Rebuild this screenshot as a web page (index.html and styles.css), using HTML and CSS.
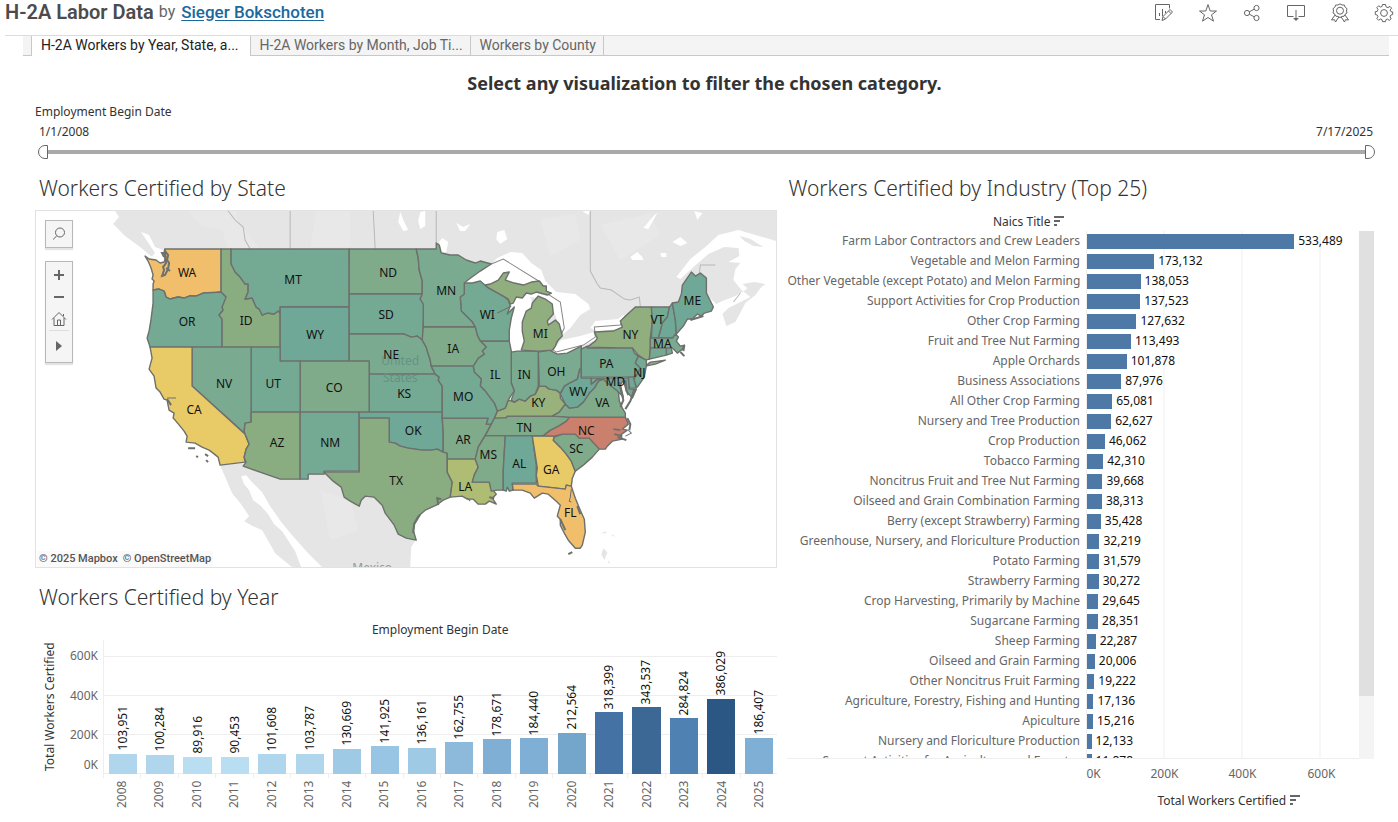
FILE: index.html
```html
<!DOCTYPE html>
<html lang="en">
<head>
<meta charset="utf-8">
<title>H-2A Labor Data</title>
<link rel="stylesheet" href="styles.css">
</head>
<body>
<header class="top">
  <h1 class="top-title">H-2A Labor Data</h1>
  <span class="top-by">by</span>
  <a class="top-author" href="#author">Sieger Bokschoten</a>
  <div class="top-actions">
    <button class="icon-btn" type="button" aria-label="Edit"><svg viewBox="0 0 20 20"><path d="M6 16.500H1.500V1.500H15.500V5.500M5.500 13V10M8.500 13V6M11.500 10V8"/><path d="M8 17.500L9 13.500L16 6.500L18.500 9L11.500 16ZM9 13.500L11.500 16M14.500 8L17 10.500"/></svg></button>
    <button class="icon-btn" type="button" aria-label="Favorite"><svg viewBox="0 0 20 20"><path d="M10 1.500L12.200 8H18.500L13.500 11.800L15.500 18.200L10 14.500L4.500 18.200L6.500 11.800L1.500 8H7.800Z"/></svg></button>
    <button class="icon-btn" type="button" aria-label="Share"><svg viewBox="0 0 20 20"><circle cx="5" cy="10" r="2.600"/><circle cx="14.500" cy="5" r="2.600"/><circle cx="14.500" cy="15" r="2.600"/><path d="M7.300 8.800L12.200 6.200M7.300 11.200L12.200 13.800"/></svg></button>
    <button class="icon-btn" type="button" aria-label="Download"><svg viewBox="0 0 20 20"><path d="M7.500 13.500H1.500V2.500H18.500V13.500H12.500M10 7V16"/><path class="solid" d="M7 15H13L10 18Z"/></svg></button>
    <button class="icon-btn" type="button" aria-label="Details"><svg viewBox="0 0 20 20"><path d="M10 .8L12 2L14.300 2L15.200 4.200L17 5.700L16.500 8L17 10L15 11.300L14 13.300L11.800 13.400L10 14.600L8.200 13.400L6 13.300L5 11.300L3 10L3.500 8L3 5.700L4.800 4.200L5.700 2L8 2Z"/><circle cx="10" cy="7.700" r="3.500"/><path d="M5 12L1.500 17L4.500 16.700L5.500 19L8.800 14M15 12L18.500 17L15.500 16.700L14.500 19L11.200 14"/></svg></button>
    <button class="icon-btn" type="button" aria-label="Settings"><svg viewBox="0 0 20 20"><path d="M8.500 1.500H11.500L12 3.800L14 4.600L16 3.400L17.600 5.200L16 7L17 8.700L18.700 9V11.500L16.800 12L16 14L17.200 15.800L15.200 17.400L13.400 16L12 16.600L11.500 18.700H8.500L8 16.600L6.400 16L4.600 17.300L2.800 15.500L4 13.700L3.200 12L1.300 11.500V8.700L3.300 8.300L4 6.500L2.800 4.700L4.700 2.800L6.400 4L8 3.500Z"/><circle cx="10" cy="10" r="3.400"/></svg></button>
  </div>
</header>

<nav class="tabs">
  <a class="tab tab-active" href="#year">H-2A Workers by Year, State, a...</a>
  <a class="tab" href="#month">H-2A Workers by Month, Job Ti...</a>
  <a class="tab" href="#county">Workers by County</a>
</nav>

<main class="dash">
  <h2 class="dash-title">Select any visualization to filter the chosen category.</h2>

  <section class="filter">
    <h3 class="filter-name">Employment Begin Date</h3>
    <div class="filter-dates"><label for="from">1/1/2008</label><label for="to">7/17/2025</label></div>
    <div class="range">
      <input class="thumb-from" id="from" type="range" min="0" max="100" value="0">
      <input class="thumb-to" id="to" type="range" min="0" max="100" value="100">
    </div>
  </section>

  <div class="columns">
    <div class="col-left">
      <h3 class="sheet-title">Workers Certified by State</h3>
      <div class="map">
        <svg class="map-svg" viewBox="36 211 740 356" role="img" aria-label="Workers certified by state">
          <g class="land">
            <path d="M115 211L119 217L113 224L125 236L140 247L152 257L161 259L165 249L300 262L500 270L560 356L660 340L674 303L706 295L716 304L722 301L735 296L745 290L755 280L763 284L755 295L745 303L735 322L726 326L722 314L728 308L742 301L750 297L741 290L733 280L735 269L740 263L728 262L739 256L738 248L724 247L708 254L692 268L680 279L676 277L690 259L705 247L718 235L738 230L776 241V211Z"/>
            <path d="M220 465L243 463L280 479L330 470L360 480L415 540L411 547L410 567H322L308 553L292 535L282 523L270 506L262 492L252 482L246 475L241 476L244 484L249 490L253 500L261 506L268 514L274 524L282 531L295 551L301 567H292L281 558L275 553L270 544L262 530L253 526L244 521L249 516L241 504L232 493Z"/>
            <path d="M603 548L607 552L604 560L601 554ZM608 560L610 563L608 563ZM600 533L606 531L606 533ZM611 534L615 536L612 536Z"/>
          </g>
          <g class="haze">
            <path d="M188 211L202 227L222 230L228 249H260L246 232L236 218L236 211ZM316 211L350 211V247H310ZM540 220L575 214L580 240L550 256ZM600 225L650 214L660 235L620 260ZM320 490L350 500L358 530L330 540Z"/>
          </g>
          <g class="water">
            <path d="M141 232L149 235L155 247L163 250L163 262L150 258L155 253ZM400 212L404 222L408 230L403 231L398 222ZM420 212L425 211L425 226L420 229L418 221ZM439 242L442 238L448 242L446 252L441 252ZM456 223L463 227L470 224L465 231L460 231ZM497 232L504 230L507 239L500 244L496 239ZM643 228L654 215L657 213L648 229ZM672 242L680 237L687 243L680 246ZM630 257L637 252L642 257L643 260L632 260ZM660 253L666 253L666 257L661 257ZM582 211L590 211L588 215ZM694 211L702 213L697 220Z"/>
            <path d="M464 284L491 264L497 258L510 252L522 253L531 263L541 270L545 281L556 292L575 294L588 304L590 309L580 315L570 328L563 334L560 328L553 310L546 299L530 297L533 305L522 320L526 350L518 353L510 351L507 330L511 302L487 287L472 284Z"/>
            <path d="M552 351L561 340L580 336L597 331L590 328L595 321L618 319L623 315L627 317L621 329L606 330L596 332L597 339L580 347L567 355L554 354Z"/>
            <path d="M738 232L775 242V280L764 288L750 284L742 278L744 270L740 262L742 250Z"/>
          </g>
          <path class="land" d="M739 236L750 239L763 247L753 246L744 241ZM742 284L754 282L765 284L757 290L748 289Z"/>
          <g class="bound">
            <path d="M228 211L235 220L243 227L245 240L250 249M290 211V249M373 211L375 249M436 211V244M590 211V271L597 284L600 288L611 290L624 299L630 300L639 297L640 307M699 273L700 265L715 265M740 293L733 302"/>
            <path class="bound-lake" d="M491 264L503 259L540 282M546 293L560 302L564 328L553 350L556 352L583 345L595 337L594 327L620 325L623 318L635 307"/>
          </g>
          <g class="states">
            <path class="c-orange" d="M145 256L149 259L156 260L160 263L164 262L166 257L164 253L165 249H221V292L213 293H206L203 293L196 296L189 296L184 298L178 297L170 299L166 297L164 291L159 289L153 290L153 284L154 281L152 279L153 275L151 268L148 261Z"/>
            <path class="c-teal" d="M153 290L159 289L164 291L166 297L170 299L178 297L184 298L189 296L196 296L203 293L221 292L226 297L225 302L222 307L223 310L219 315L222 319V347H150L147 338L149 331L151 319L153 303Z"/>
            <path class="c-green2" d="M221 249H231V264L235 272L240 277L245 284H248L248 292L245 299L252 298L256 307L259 309L262 315L267 313L274 314L278 311L280 313V347H222V319L219 315L223 310L222 307L226 297L221 292Z"/>
            <path class="c-teal" d="M231 249H349V307H280V313L278 311L274 314L267 313L262 315L259 309L256 307L252 298L245 299L248 292L248 284H245L240 277L235 272L231 264Z"/>
            <path class="c-teal2" d="M280 307H349V361H280Z"/>
            <path class="c-green1" d="M349 249H416L418 258L419 270L422 281L422 294H349Z"/>
            <path class="c-teal" d="M349 294H422L420 299L424 304L423 327V334L422 340L417 336L411 337L404 334H349Z"/>
            <path class="c-teal1" d="M349 334H404L411 337L417 336L422 340L426 347L428 354L430 360L431 366L435 374H369V361H349Z"/>
            <path class="c-teal" d="M369 374H435L439 377L438 380L442 386V412H369Z"/>
            <path class="c-green1" d="M300 361H369V412H300Z"/>
            <path class="c-teal" d="M251 347H280V361H300V412H251Z"/>
            <path class="c-teal1" d="M192 347H251V412V422L245 423L244 431L245 434L192 386Z"/>
            <path class="c-yellow" d="M150 347H192V386L245 434L249 444L246 449L244 457L245 462L220 465L218 457L213 453L209 450L202 447L195 443L186 442L187 436L184 431L180 426L175 420L173 418L174 413L169 410L167 400L164 399L160 392L156 388L154 376L149 369L152 358Z"/>
            <path class="c-green2" d="M251 412H300V479H280L243 466L246 462L244 457L246 449L249 444L245 434L244 431L245 423L251 422Z"/>
            <path class="c-teal" d="M300 412H359V471H324V474H308V479H300Z"/>
            <path class="c-teal2" d="M359 412H442V418L443 432V452L437 449L431 450L422 450L415 449L408 448L400 446L395 443L389 442V418H359Z"/>
            <path class="c-green2" d="M359 418H389V442L395 443L400 446L408 448L415 449L422 450L431 450L437 449L443 452L447 453V472L452 482L450 497L443 500L436 505L425 510L418 516L414 523L413 530L416 540L406 538L398 534L394 525L385 513L382 505L374 497L365 496L361 500L359 506L350 501L344 497L341 487L333 481L324 472H359Z"/>
            <path class="c-green1" d="M442 418H488L486 424L491 424L485 435L478 447L475 459H447V453L443 452V432Z"/>
            <path class="c-olive" d="M447 459H475L478 467L474 475L472 482H489L491 488L496 494L492 498L496 504L489 501L485 504L478 504L473 499L467 499L462 496L450 497L452 482L447 472Z"/>
            <path class="c-green1" d="M485 435.500H505L503 470V490L497 490L491 491L489 482H472L474 475L478 467L475 459L478 447Z"/>
            <path class="c-teal2" d="M505 435.500H532L536 465V483H512L513 490L509 491L507 487L506 491L503 490V470Z"/>
            <path class="c-yellow" d="M532 436H554L553 440L560 447L566 454L571 461L575 471L572 478L571 486L566 485L565 489L538 486L536 475L537 468Z"/>
            <path class="c-orange" d="M512 484H536L538 486L565 489L566 485L571 486L575 498L580 510L584 519L585 532L582 545L580 548L575 548L568 540L564 533L560 525L560 519L557 516L560 505L556 501L548 494L542 493L534 498L530 493L522 490L513 490Z"/>
            <path class="c-green1" d="M554 437L562 434H575L579 438L589 438L599 449L592 457L583 465L575 471L571 461L566 454L560 447L553 440Z"/>
            <path class="c-red" d="M543 435.500L550 430L558 426L566 421L569 417H625L628 424L622 429L627 430L620 435L622 439L612 441L607 446L605 449H599L589 438H579L575 434H562L554 436Z"/>
            <path class="c-green1" d="M494 417.500H506L507 416H553L569 417L566 421L558 426L550 430L543 435.500H485L488 430L491 424Z"/>
            <path class="c-kentucky" d="M494 418L497 411L505 408L508 400L514 402L519 399L525 401L530 396L535 394L539 386L545 386L549 389L556 390L560 393V398L565 404L559 412L552 416H507L506 417.500Z"/>
            <path class="c-green1" d="M552 416L559 412L565 404L569 408L577 407L583 402L589 393L594 388L598 381L603 379L610 385L618 391L619 401L622 408L625 413V417H569Z"/>
            <path class="c-teal2" d="M560 394L564 386L569 383L573 381L577 379L579 370L581 367V378H591V384L597 379L603 379L598 381L594 388L589 393L583 402L577 407L569 408L565 404Z"/>
            <path class="c-teal1" d="M538 352L549 350L557 354L567 353L575 349L581 346V367L579 370L577 379L569 383L564 386L560 393L556 390L549 389L545 386H539Z"/>
            <path class="c-teal1" d="M511 352L517 351L538 351V386L535 394L530 396L525 401L519 399L514 402L511 400L514 391L511 383Z"/>
            <path class="c-teal1" d="M480 341H509L511 351V383L514 391L511 395L508 400L505 408L497 411L494 403L488 395L485 391L480 386L481 379L474 372L473 366L478 358L484 354L482 351L486 347Z"/>
            <path class="c-teal" d="M464 283L472 283L480 281L487 287L503 296L508 300L510 306L507 314L514 307L511 318L509 330V341H480L477 335L475 327L472 322L461 311L460 297L464 294Z"/>
            <path class="c-teal1" d="M416 249H436V243L439 245L441 253L450 255L458 255L466 260L475 263L480 261L491 264L480 271L469 279L464 283V294L460 297L461 311L472 322L475 327H423V304L420 299L422 294V281L419 270L418 258Z"/>
            <path class="c-green1" d="M423 327H475L477 335L480 341L486 347L482 351L484 354L478 358L473 366H431L430 360L428 354L426 347L422 340Z"/>
            <path class="c-teal" d="M431 366H473L474 372L481 379L480 386L485 391L488 395L494 403L497 411L494 418L491 424H486L488 418H442V386L438 380L439 377L435 374Z"/>
            <path class="c-green3" d="M521 350L524 341L522 331V322L526 311L531 308L532 303L538 296L545 299L552 304L553 314L547 321L548 325L555 320L559 324L562 336L557 341L555 346L552 350L538 351Z"/>
            <path class="c-green3" d="M485 285L490 284L498 280L503 273L509 272L505 280L514 283L523 285L531 282L539 281L543 286L546 286L546 291L551 293L547 295L536 292L531 294L526 293L522 298L516 297L513 303L510 304L508 299L503 296L487 287Z"/>
            <path class="c-green3" d="M587 347L595 341L597 338L594 332L613 331L622 327L620 321L635 307H651L652 320L650 338V350L649 359L645 360L638 355L632 348Z"/>
            <path class="c-green3" d="M645 366L650 362L658 361L665 360L655 364Z"/>
            <path class="c-teal" d="M581 349L587 346V348H632L634 353L638 356L635 363L640 368L637 374L633 377H581Z"/>
            <path class="c-teal" d="M638 356L646 360V366L645 371L644 377L637 387L632 381L637 374L640 368L635 363Z"/>
            <path class="c-teal" d="M651 307H669L667 317L662 323L660 331L658 338H651L652 320Z"/>
            <path class="c-teal2" d="M669 307L672 303L675 320L676 334L672 338H658L660 331L662 323L667 317Z"/>
            <path class="c-teal1" d="M650 338H672L675 334L678 337L676 341L680 346L684 345L682 349L677 353L672 348H650Z"/>
            <path class="c-teal" d="M650 348H666V355L649 359ZM666 348H671L672 353L666 355Z"/>
            <path class="c-teal2" d="M672 303L678 302L681 294L682 285L691 272L695 276L700 273L706 278V293L709 299L713 307L711 311L704 313L701 316L697 314L692 319L687 319L683 326L676 334L675 320Z"/>
            <path class="c-teal" d="M591 378H628L629 389H636L632 398L626 391L623 380L620 385L623 397L616 390L607 383L603 379L597 379L591 384Z"/>
            <path class="c-teal2" d="M628 377H633L636 388H629Z"/>
          </g>
          <g class="coast">
            <path d="M165 251L168 255L167 260L169 263L168 269L165 275L162 276L164 270L163 267L166 263L165 258ZM166 253L162 253L164 257M166 268L170 271M167 399L171 405M188 448L195 448M196 456L198 457M205 454L208 456M206 460L208 462M577 506L580 514M568 554L572 552M560 519L565 530M619 382L621 392L623 400L620 407M625 380L626 390L628 395M634 389L630 401L625 409M620 430L613 429M622 436L614 434M617 437L626 440M627 418L630 424L629 430M680 352L684 356M684 345L683 351M413 533L414 524L420 514M438 505L437 498L441 499M489 497L494 498M703 316L690 320"/>
            <path class="coast-thin" d="M167 398H176M571 489L570 497L569 501L571 502M497 313L511 306M467 498L470 501M628 430L631 433L625 436"/>
          </g>
          <text class="country" x="400" y="365">United</text><text class="country" x="400" y="382">States</text>
          <text class="country mexico" x="372" y="572">Mexico</text>
          <g class="abbr">
            <text x="187" y="277">WA</text><text x="187" y="326">OR</text><text x="246" y="325">ID</text><text x="293" y="284">MT</text><text x="315" y="339">WY</text><text x="388" y="277">ND</text><text x="386" y="319">SD</text><text x="391" y="359">NE</text><text x="404" y="398">KS</text><text x="334" y="392">CO</text><text x="273" y="388">UT</text><text x="224" y="388">NV</text><text x="194" y="414">CA</text><text x="277" y="447">AZ</text><text x="330" y="447">NM</text><text x="413" y="435">OK</text><text x="396" y="485">TX</text><text x="463" y="444">AR</text><text x="465" y="491">LA</text><text x="488" y="459">MS</text><text x="519" y="468">AL</text><text x="551" y="474">GA</text><text x="570" y="517">FL</text><text x="576" y="453">SC</text><text x="586" y="435">NC</text><text x="524" y="432">TN</text><text x="538" y="407">KY</text><text x="602" y="407">VA</text><text x="578" y="396">WV</text><text x="556" y="376">OH</text><text x="524" y="379">IN</text><text x="495" y="379">IL</text><text x="487" y="319">WI</text><text x="446" y="295">MN</text><text x="453" y="353">IA</text><text x="463" y="401">MO</text><text x="540" y="338">MI</text><text x="630" y="339">NY</text><text x="606" y="368">PA</text><text x="639" y="377">NJ</text><text x="657" y="324">VT</text><text x="662" y="348">MA</text><text x="692" y="305">ME</text><text x="615" y="386">MD</text>
          </g>
        </svg>
        <div class="map-tools">
          <div class="tool-group"><button class="tool" type="button" aria-label="Search map"><svg viewBox="0 0 16 16"><circle cx="9" cy="6.500" r="4.500"/><path d="M5.800 9.800L2 13.500"/></svg></button></div>
          <div class="tool-group tool-stack">
            <button class="tool" type="button" aria-label="Zoom in"><svg class="heavy" viewBox="0 0 16 16"><path d="M3 8H13M8 3V13"/></svg></button>
            <button class="tool" type="button" aria-label="Zoom out"><svg class="heavy" viewBox="0 0 16 16"><path d="M3 8H13"/></svg></button>
            <button class="tool" type="button" aria-label="Reset map"><svg viewBox="0 0 16 16"><path d="M1 8.500L8 1.500L15 8.500M3 7V14.500H13V7M6.500 14.500V9H9.500V14.500M12.500 5V3"/></svg></button>
            <button class="tool tool-more" type="button" aria-label="Map options"><svg viewBox="0 0 16 16"><path class="solid" d="M5 3L11 8L5 13Z"/></svg></button>
          </div>
        </div>
        <div class="credits"><a href="#mapbox">© 2025 Mapbox</a><a href="#osm">© OpenStreetMap</a></div>
      </div>

      <h3 class="sheet-title sheet-title-year">Workers Certified by Year</h3>
      <p class="year-head">Employment Begin Date</p>
      <div class="year-chart">
        <div class="y-name">Total Workers Certified</div>
        <div class="y-axis"><span>600K</span><span>400K</span><span>200K</span><span>0K</span></div>
        <div class="y-main">
          <div class="y-plot">
            <div class="y-col"><span>103,951</span><i class="b2" style="height:15.2%"></i></div>
            <div class="y-col"><span>100,284</span><i class="b2" style="height:14.7%"></i></div>
            <div class="y-col"><span>89,916</span><i class="b1" style="height:13.1%"></i></div>
            <div class="y-col"><span>90,453</span><i class="b1" style="height:13.2%"></i></div>
            <div class="y-col"><span>101,608</span><i class="b2" style="height:14.9%"></i></div>
            <div class="y-col"><span>103,787</span><i class="b2" style="height:15.2%"></i></div>
            <div class="y-col"><span>130,669</span><i class="b3" style="height:19.1%"></i></div>
            <div class="y-col"><span>141,925</span><i class="b4" style="height:20.7%"></i></div>
            <div class="y-col"><span>136,161</span><i class="b3" style="height:19.9%"></i></div>
            <div class="y-col"><span>162,755</span><i class="b5" style="height:23.8%"></i></div>
            <div class="y-col"><span>178,671</span><i class="b6" style="height:26.1%"></i></div>
            <div class="y-col"><span>184,440</span><i class="b6" style="height:27%"></i></div>
            <div class="y-col"><span>212,564</span><i class="b7" style="height:31.1%"></i></div>
            <div class="y-col"><span>318,399</span><i class="b9" style="height:46.5%"></i></div>
            <div class="y-col"><span>343,537</span><i class="b10" style="height:50.2%"></i></div>
            <div class="y-col"><span>284,824</span><i class="b8" style="height:41.6%"></i></div>
            <div class="y-col"><span>386,029</span><i class="b11" style="height:56.4%"></i></div>
            <div class="y-col"><span>186,407</span><i class="b6" style="height:27.3%"></i></div>
          </div>
          <div class="y-years"><span>2008</span><span>2009</span><span>2010</span><span>2011</span><span>2012</span><span>2013</span><span>2014</span><span>2015</span><span>2016</span><span>2017</span><span>2018</span><span>2019</span><span>2020</span><span>2021</span><span>2022</span><span>2023</span><span>2024</span><span>2025</span></div>
        </div>
      </div>
    </div>

    <div class="col-right">
      <h3 class="sheet-title">Workers Certified by Industry (Top 25)</h3>
      <div class="naics">Naics Title <svg class="sort" viewBox="0 0 10 10"><path d="M0 1H10M0 5H6M0 9H3"/></svg></div>
      <div class="ind">
        <div class="ind-view">
          <table class="ind-table">
            <tbody>
            <tr><th scope="row">Farm Labor Contractors and Crew Leaders</th><td><div class="bar"><i style="width:76.2%"></i>533,489</div></td></tr>
            <tr><th scope="row">Vegetable and Melon Farming</th><td><div class="bar"><i style="width:24.7%"></i>173,132</div></td></tr>
            <tr><th scope="row">Other Vegetable (except Potato) and Melon Farming</th><td><div class="bar"><i style="width:19.7%"></i>138,053</div></td></tr>
            <tr><th scope="row">Support Activities for Crop Production</th><td><div class="bar"><i style="width:19.6%"></i>137,523</div></td></tr>
            <tr><th scope="row">Other Crop Farming</th><td><div class="bar"><i style="width:18.2%"></i>127,632</div></td></tr>
            <tr><th scope="row">Fruit and Tree Nut Farming</th><td><div class="bar"><i style="width:16.2%"></i>113,493</div></td></tr>
            <tr><th scope="row">Apple Orchards</th><td><div class="bar"><i style="width:14.6%"></i>101,878</div></td></tr>
            <tr><th scope="row">Business Associations</th><td><div class="bar"><i style="width:12.6%"></i>87,976</div></td></tr>
            <tr><th scope="row">All Other Crop Farming</th><td><div class="bar"><i style="width:9.3%"></i>65,081</div></td></tr>
            <tr><th scope="row">Nursery and Tree Production</th><td><div class="bar"><i style="width:8.9%"></i>62,627</div></td></tr>
            <tr><th scope="row">Crop Production</th><td><div class="bar"><i style="width:6.6%"></i>46,062</div></td></tr>
            <tr><th scope="row">Tobacco Farming</th><td><div class="bar"><i style="width:6%"></i>42,310</div></td></tr>
            <tr><th scope="row">Noncitrus Fruit and Tree Nut Farming</th><td><div class="bar"><i style="width:5.7%"></i>39,668</div></td></tr>
            <tr><th scope="row">Oilseed and Grain Combination Farming</th><td><div class="bar"><i style="width:5.5%"></i>38,313</div></td></tr>
            <tr><th scope="row">Berry (except Strawberry) Farming</th><td><div class="bar"><i style="width:5.1%"></i>35,428</div></td></tr>
            <tr><th scope="row">Greenhouse, Nursery, and Floriculture Production</th><td><div class="bar"><i style="width:4.6%"></i>32,219</div></td></tr>
            <tr><th scope="row">Potato Farming</th><td><div class="bar"><i style="width:4.5%"></i>31,579</div></td></tr>
            <tr><th scope="row">Strawberry Farming</th><td><div class="bar"><i style="width:4.3%"></i>30,272</div></td></tr>
            <tr><th scope="row">Crop Harvesting, Primarily by Machine</th><td><div class="bar"><i style="width:4.2%"></i>29,645</div></td></tr>
            <tr><th scope="row">Sugarcane Farming</th><td><div class="bar"><i style="width:4.1%"></i>28,351</div></td></tr>
            <tr><th scope="row">Sheep Farming</th><td><div class="bar"><i style="width:3.2%"></i>22,287</div></td></tr>
            <tr><th scope="row">Oilseed and Grain Farming</th><td><div class="bar"><i style="width:2.9%"></i>20,006</div></td></tr>
            <tr><th scope="row">Other Noncitrus Fruit Farming</th><td><div class="bar"><i style="width:2.7%"></i>19,222</div></td></tr>
            <tr><th scope="row">Agriculture, Forestry, Fishing and Hunting</th><td><div class="bar"><i style="width:2.4%"></i>17,136</div></td></tr>
            <tr><th scope="row">Apiculture</th><td><div class="bar"><i style="width:2.2%"></i>15,216</div></td></tr>
            <tr><th scope="row">Nursery and Floriculture Production</th><td><div class="bar"><i style="width:1.7%"></i>12,133</div></td></tr>
            <tr><th scope="row">Support Activities for Agriculture and Forestry</th><td><div class="bar"><i style="width:1.7%"></i>11,878</div></td></tr>
            </tbody>
          </table>
        </div>
        <div class="ind-scroll"><div class="ind-scroll-thumb"></div></div>
      </div>
      <div class="x-axis"><span>0K</span><span>200K</span><span>400K</span><span>600K</span></div>
      <div class="x-name">Total Workers Certified <svg class="sort" viewBox="0 0 10 10"><path d="M0 1H10M0 5H6M0 9H3"/></svg></div>
    </div>
  </div>
</main>
</body>
</html>
```
FILE: styles.css
```css
* { box-sizing: border-box; }
body { margin: 0; background: #fff; color: #333; font: 12px/16px "Noto Sans", "Open Sans", sans-serif; }
h1, h2, h3, p { margin: 0; }
button { border: 0; padding: 0; background: none; cursor: pointer; }
svg { fill: none; stroke: #666; }
.solid { fill: #666; stroke: none; }

.top { display: flex; align-items: center; margin-left: 5px; height: 36px; padding-bottom: 12px; border-bottom: 1px solid #dcdcdc; font-family: Roboto, sans-serif; }
.top-title { color: #4c4c4c; font-size: 20px; line-height: 24px; font-weight: 600; }
.top-by { margin: 0 6px 0 5px; font-size: 16px; color: #666; }
.top-author { font-size: 17px; font-weight: 500; color: #1a699e; text-underline-offset: 2px; }
.top-actions { display: flex; gap: 24px; margin-left: auto; padding: 3px 4px 0 0; }
.icon-btn { width: 20px; height: 20px; }
.icon-btn svg { display: block; width: 20px; height: 20px; }

.tabs { display: flex; height: 20px; margin: 0 9px 0 23px; padding-left: 8px; background: linear-gradient(#c8c8c8, #c8c8c8) bottom / 100% 1px no-repeat #f4f4f4; font: 14px/19px Roboto, sans-serif; }
.tab { padding: 0 7px 0 9px; border-right: 1px solid #c8c8c8; color: #666; text-decoration: none; white-space: nowrap; }
.tab-active { background: #fff; border-left: 1px solid #c8c8c8; color: #222; padding: 0 11px 0 9px; }

.dash { padding: 13px 24px 0 35px; }
.dash-title { text-align: center; font-size: 18px; line-height: 28px; font-weight: 700; }
.filter { padding-top: 7px; }
.filter-name { font-size: 12px; line-height: 16px; font-weight: 400; }
.filter-dates { display: flex; justify-content: space-between; padding: 4px 1px 4px 4px; }
.range { display: grid; margin: 0 -1px 0 3px; background: linear-gradient(#a9a9a9, #a9a9a9) center / calc(100% - 16px) 4px no-repeat; }
.range input { grid-area: 1 / 1; width: 100%; height: 16px; margin: 0; background: none; appearance: none; pointer-events: none; }
.range input::-webkit-slider-thumb { appearance: none; width: 10px; height: 14px; background: #fff; border: 1px solid #666; pointer-events: auto; }
.thumb-from::-webkit-slider-thumb { border-radius: 7px 0 0 7px; }
.thumb-to::-webkit-slider-thumb { border-radius: 0 7px 7px 0; }

.columns { display: grid; grid-template-columns: 743fr 587fr; gap: 10px; padding-top: 14px; }
.col-left, .col-right { min-width: 0; }
.sheet-title { padding-left: 4px; font-size: 21px; line-height: 28px; font-weight: 300; color: #333; }
.col-right .sheet-title { padding-left: 1px; }

.map { position: relative; margin-top: 8px; border: 1px solid #e2e2e2; }
.map-svg { display: block; width: 100%; height: auto; stroke: none; }
.land { fill: #e5e5e5; }
.haze { fill: #e8e8e8; }
.water { fill: #fff; }
.bound { fill: none; stroke: #b8b8b8; }
.bound-lake { stroke: #888; }
.states { stroke: #6d706c; stroke-width: 1.4; stroke-linejoin: round; }
.coast { fill: none; stroke: #6d706c; stroke-width: 2; }
.coast-thin { stroke-width: 1; }
.c-teal { fill: #74a994; }
.c-teal1 { fill: #7aab91; }
.c-teal2 { fill: #6fa896; }
.c-green1 { fill: #80ab8a; }
.c-green2 { fill: #89ad81; }
.c-green3 { fill: #90ae7e; }
.c-kentucky { fill: #99b17b; }
.c-olive { fill: #afbc74; }
.c-yellow { fill: #e8cb67; }
.c-orange { fill: #f1be6c; }
.c-red { fill: #cb806d; }
.abbr { fill: #111; font-size: 12px; text-anchor: middle; }
.country { fill: #649381; font-size: 12px; text-anchor: middle; }
.mexico { fill: #999; }
.map-tools { position: absolute; left: 9px; top: 9px; }
.tool-group { display: flex; flex-direction: column; width: 28px; padding: 2px 3px; background: #f5f5f5; border: 1px solid #b8b8b8; box-shadow: 0 2px 1px #e4e4e4; }
.tool-stack { margin-top: 13px; }
.tool { display: grid; place-items: center; height: 22px; }
.tool svg { width: 16px; height: 16px; }
.tool-more { height: 30px; border-top: 1px solid #ddd; }
.heavy { stroke-width: 2; }
.credits { position: absolute; left: 1px; bottom: 0; display: flex; gap: 5px; padding: 0 2px; background: #fafafa; font: 500 11px/16px Roboto, sans-serif; }
.credits a { color: #555; text-decoration: none; }

.sheet-title-year { margin-top: 15px; }
.year-head { margin-top: 11px; padding-left: 68px; text-align: center; line-height: 16px; }
.year-chart { display: grid; grid-template-columns: 22px 38px 1fr; margin-left: 4px; padding-top: 2px; }
.y-name { height: 134px; writing-mode: vertical-rl; rotate: 180deg; text-align: center; line-height: 22px; white-space: nowrap; }
.y-axis { display: grid; grid-template-rows: 32px 47px 32px 28px; align-items: center; align-content: start; text-align: right; padding-right: 1px; color: #666; }
.y-main { margin-left: 4px; }
.y-plot { display: grid; grid-template-columns: repeat(18, 1fr); height: 134px; border-left: 1px solid #eee; background: repeating-linear-gradient(to top, #eee 0 1px, transparent 1px 39px); }
.y-col { display: flex; flex-direction: column; justify-content: flex-end; align-items: center; min-width: 0; }
.y-col span { margin-bottom: 3px; writing-mode: vertical-rl; rotate: 180deg; color: #111; white-space: nowrap; }
.y-col i { width: 75%; flex: none; }
.y-years { display: grid; grid-template-columns: repeat(18, 1fr); background: repeating-linear-gradient(to right, #eee 0 1px, transparent 1px calc(100% / 18)) top / 100% 4px no-repeat; }
.y-years span { display: flex; align-items: center; justify-content: flex-start; height: 34px; writing-mode: vertical-rl; rotate: 180deg; color: #666; }
.b1 { background: #b9ddf1; }
.b2 { background: #b0d6ee; }
.b3 { background: #9ecae6; }
.b4 { background: #99c5e4; }
.b5 { background: #8dbadb; }
.b6 { background: #80afd6; }
.b7 { background: #74a5cb; }
.b8 { background: #5081b3; }
.b9 { background: #4472a4; }
.b10 { background: #3b6895; }
.b11 { background: #2a5783; }

.naics { display: flex; justify-content: flex-end; gap: 4px; width: 277px; padding-top: 12px; line-height: 16px; }
.sort { width: 10px; height: 10px; margin-top: 2px; stroke-width: 2; }
.ind { display: flex; height: 528px; margin-top: 1px; }
.ind-view { flex: 1; overflow: hidden; border-bottom: 1px solid #eee; }
.ind-table { width: 100%; table-layout: fixed; border-collapse: collapse; }
.ind-table th { width: 299px; height: 20px; padding: 0 6px 0 0; text-align: right; font-weight: 400; color: #666; white-space: nowrap; line-height: 20px; }
.ind-table td { padding: 0; border-left: 1px solid #eee; background: repeating-linear-gradient(to right, transparent 0 77px, #eee 77px 78px); }
.bar { display: flex; align-items: center; gap: 4px; height: 20px; color: #111; }
.bar i { height: 15px; background: #4e79a7; }
.ind-scroll { width: 15px; background: #f4f4f4; }
.ind-scroll-thumb { height: 88%; background: #e0e0e0; }
.x-axis { display: grid; grid-template-columns: 39px 78px 78px 80px; padding: 7px 0 0 299px; color: #666; }
.x-axis span + span { justify-self: center; }
.x-name { display: flex; justify-content: center; gap: 4px; padding: 11px 0 0 296px; }
```
